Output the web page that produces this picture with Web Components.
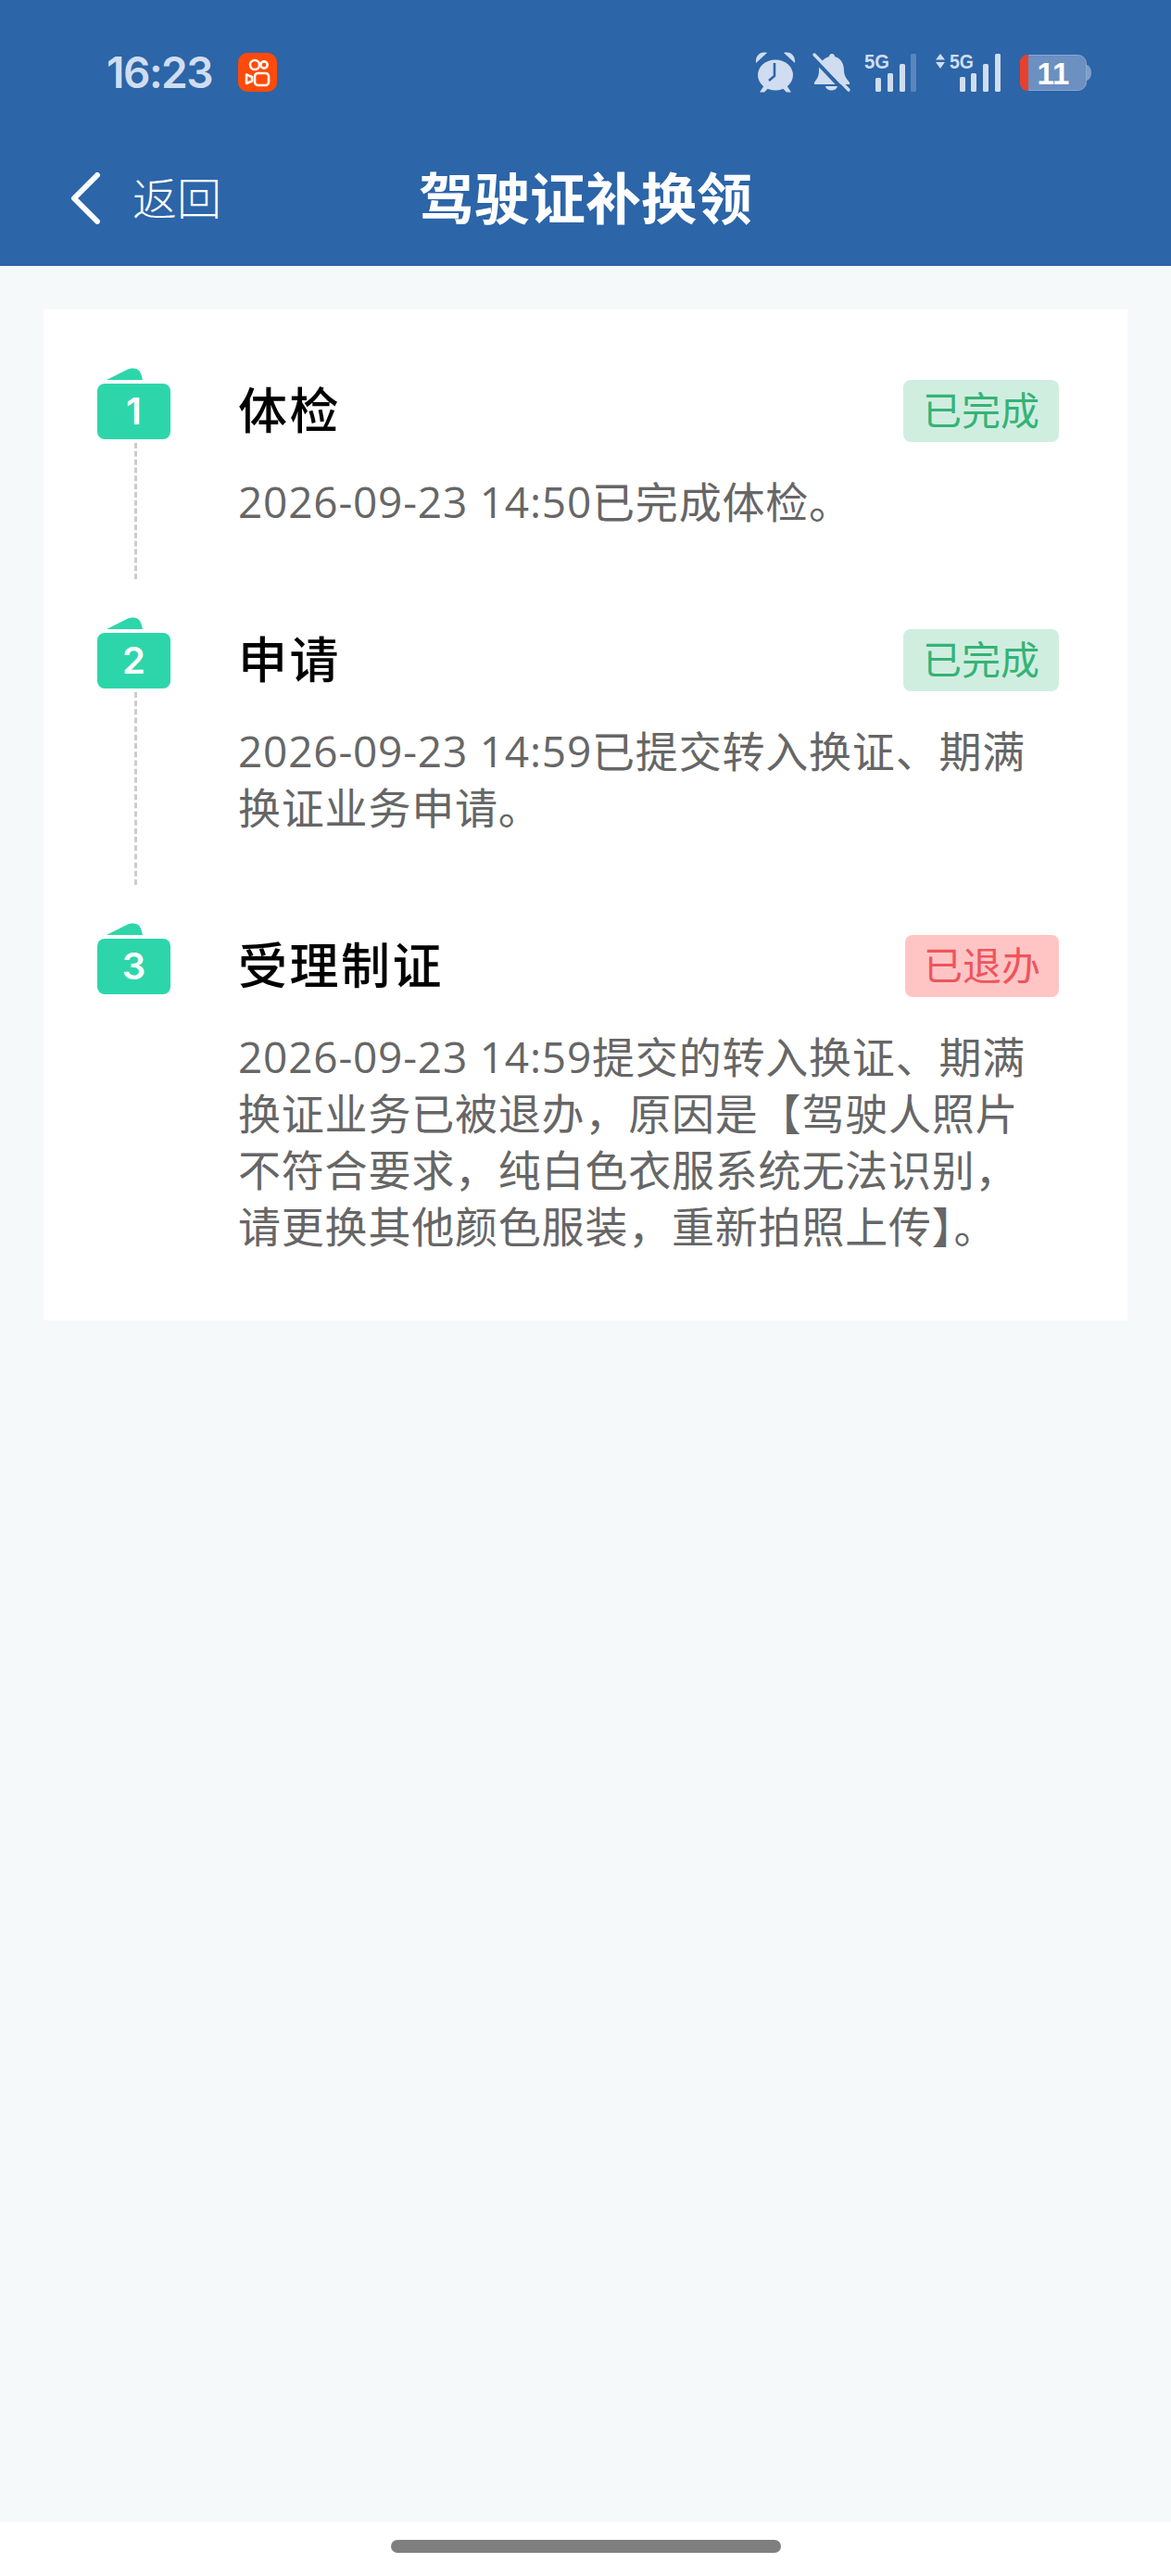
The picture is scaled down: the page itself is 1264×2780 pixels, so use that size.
<!DOCTYPE html>
<html lang="zh-CN">
<head>
<meta charset="utf-8">
<title>驾驶证补换领</title>
<style>
    html, body {
        margin: 0;
        height: 100%;
    }
    body {
        width: 1264px;
        height: 2780px;
        display: flex;
        flex-direction: column;
        background: #ffffff;
        font-family: Inter, "Noto Sans CJK SC", sans-serif;
    }
</style>
</head>
<body>
<status-bar time="16:23"></status-bar>
<nav-bar heading="驾驶证补换领" back="返回"></nav-bar>
<page-body>
    <step-list>
        <step-item number="1" heading="体检" status="已完成" text="2026-09-23 14:50已完成体检。"></step-item>
        <step-item number="2" heading="申请" status="已完成" text="2026-09-23 14:59已提交转入换证、期满换证业务申请。"></step-item>
        <step-item number="3" heading="受理制证" status="已退办" tone="fail" last text="2026-09-23 14:59提交的转入换证、期满换证业务已被退办，原因是【驾驶人照片不符合要求，纯白色衣服系统无法识别，请更换其他颜色服装，重新拍照上传】。"></step-item>
    </step-list>
</page-body>
<home-bar></home-bar>

<script>
/**
 * Top system bar with the clock and the status icons.
 * @extends HTMLElement
 */
class StatusBar extends HTMLElement {
    constructor() {
        super();
        this.shadow = this.attachShadow({ mode: "open" });
    }

    connectedCallback() {
        this.shadow.innerHTML = `
        <style>
            :host {
                display: flex;
                align-items: center;
                box-sizing: border-box;
                height: 156px;
                padding: 0 86px 0 115px;
                background: #2c65a8;
                color: #d0ddf0;
            }
            #time {
                font-size: 46px;
                font-weight: 600;
                letter-spacing: -1.5px;
                width: 142px;
            }
            #icons {
                margin-left: auto;
                display: flex;
                align-items: center;
            }
            svg {
                display: block;
                fill: #d0ddf0;
                overflow: visible;
            }
            text {
                font-family: "Liberation Sans", sans-serif;
                font-weight: 700;
            }
        </style>
        <span id="time">${this.getAttribute("time")}</span>
        <svg width="42" height="42" viewBox="0 0 42 42">
            <rect width="42" height="42" rx="10" fill="#fe4a0a"/>
            <g fill="none" stroke="#fff8f0" stroke-width="2.6">
                <circle cx="18" cy="13" r="5"/>
                <circle cx="28" cy="13" r="3.600"/>
                <rect x="18" y="22" width="15" height="13" rx="3.500"/>
                <path d="M15 26l-6-2.500v9.500l6-2.500z" stroke-linejoin="round"/>
            </g>
        </svg>
        <div id="icons">
            <svg width="44" height="44" viewBox="0 0 44 44">
                <ellipse cx="22" cy="25" rx="19" ry="16.500"/>
                <path d="M1 12C0 4 6-1 13 1zM43 12C44 4 38-1 31 1zM10 36l-5 7.500h5l5-5zM34 36l5 7.500h-5l-5-5z"/>
                <path d="M21 12v14l-6 5" fill="none" stroke="#2c65a8" stroke-width="2.600"/>
            </svg>
            <svg width="41" height="40" viewBox="0 0 41 40" style="margin-left:18px">
                <path d="M21 0c2 0 3 1.500 3 3 7 2 10 8 10 15 0 6 3 9 6 13v2H2v-2c3-4 5-7 5-13 0-7 4-13 11-15 0-1.500 1-3 3-3zM14 35h13c-1 6-12 6-13 0z"/>
                <path d="M-1 3l36 38" stroke="#2c65a8" stroke-width="4"/>
                <path d="M2 1l37 38" stroke="#d0ddf0" stroke-width="3.400" stroke-linecap="round"/>
            </svg>
            <svg width="56" height="41" viewBox="0 0 56 41" style="margin-left:15px">
                <text x="0" y="16" font-size="22" textLength="27" lengthAdjust="spacingAndGlyphs">5G</text>
                <rect x="12" y="26" width="6" height="15" rx="1.500"/>
                <rect x="25" y="21" width="6" height="20" rx="1.500"/>
                <rect x="38" y="11" width="6" height="30" rx="1.500"/>
                <rect x="50" y="0" width="6" height="41" rx="1.500" opacity=".28"/>
            </svg>
            <svg width="70" height="41" viewBox="0 0 70 41" style="margin-left:21px">
                <path d="M5 0l5 6.500H0zM0 9h10l-5 7z"/>
                <text x="15" y="16" font-size="22" textLength="26" lengthAdjust="spacingAndGlyphs">5G</text>
                <rect x="26" y="25" width="6" height="16" rx="1.500"/>
                <rect x="38" y="21" width="6" height="20" rx="1.500"/>
                <rect x="51" y="11" width="6" height="30" rx="1.500"/>
                <rect x="64" y="0" width="6" height="41" rx="1.500"/>
            </svg>
            <svg width="77" height="39" viewBox="0 0 77 39" style="margin-left:21px">
                <path d="M72 11c3 1 5 4 5 8.500S75 27 72 28z" fill="#7f9fca"/>
                <rect x=".5" y=".5" width="71" height="38" rx="9" fill="#6b90c1" stroke="#8aa8d0"/>
                <path d="M9 0H8C3 0 0 4 0 9v21c0 5 3 9 8 9h1z" fill="#e8402c"/>
                <text x="36" y="32" font-size="33" text-anchor="middle" fill="#fff">11</text>
            </svg>
        </div>
        `;
    }
}
customElements.define("status-bar", StatusBar);

/**
 * Navigation bar with the back link and the centred page title.
 * @extends HTMLElement
 */
class NavBar extends HTMLElement {
    constructor() {
        super();
        this.shadow = this.attachShadow({ mode: "open" });
    }

    connectedCallback() {
        this.shadow.innerHTML = `
        <style>
            :host {
                display: grid;
                grid-template-columns: 1fr auto 1fr;
                align-items: center;
                box-sizing: border-box;
                height: 131px;
                padding-bottom: 16px;
                background: #2c65a8;
                color: #ffffff;
            }
            #back {
                display: flex;
                align-items: center;
                gap: 34px;
                padding-left: 76px;
                font-size: 48px;
                font-family: "Noto Sans CJK SC", sans-serif;
                font-weight: 300;
            }
            #back span {
                padding-bottom: 6px;
            }
            svg {
                display: block;
            }
            h1 {
                margin: 0;
                padding-bottom: 6px;
                font-size: 60px;
                line-height: 80px;
                font-weight: 700;
                font-family: "Noto Sans CJK SC", sans-serif;
            }
        </style>
        <div id="back">
            <svg width="33" height="56" viewBox="0 0 33 56">
                <path d="M29 3L4 28l25 25" fill="none" stroke="#fff" stroke-width="6" stroke-linecap="round" stroke-linejoin="round"/>
            </svg>
            <span>${this.getAttribute("back")}</span>
        </div>
        <h1>${this.getAttribute("heading")}</h1>
        `;
    }
}
customElements.define("nav-bar", NavBar);

/**
 * Grey area that fills the page below the navigation bar.
 * @extends HTMLElement
 */
class PageBody extends HTMLElement {
    constructor() {
        super();
        this.shadow = this.attachShadow({ mode: "open" });
        this.shadow.innerHTML = `
        <style>
            :host {
                display: block;
                flex: 1;
                box-sizing: border-box;
                padding: 47px 47px 0;
                background: #f5f9fa;
            }
        </style>
        <slot></slot>
        `;
    }
}
customElements.define("page-body", PageBody);

/**
 * White card that holds the steps.
 * @extends HTMLElement
 */
class StepList extends HTMLElement {
    constructor() {
        super();
        this.shadow = this.attachShadow({ mode: "open" });
        this.shadow.innerHTML = `
        <style>
            :host {
                display: flex;
                flex-direction: column;
                box-sizing: border-box;
                padding: 76px 74px 0 58px;
                background: #ffffff;
            }
        </style>
        <slot></slot>
        `;
    }
}
customElements.define("step-list", StepList);

/**
 * One step of the progress list: marker, title, status badge and description.
 * @extends HTMLElement
 */
class StepItem extends HTMLElement {
    constructor() {
        super();
        this.shadow = this.attachShadow({ mode: "open" });
    }

    connectedCallback() {
        const fail = this.getAttribute("tone") === "fail";
        const last = this.hasAttribute("last");
        this.shadow.innerHTML = `
        <style>
            :host {
                display: flex;
                gap: 73px;
                font-family: Inter, "Noto Sans CJK SC", sans-serif;
            }
            #marker {
                flex: none;
                width: 79px;
                margin-top: -13px;
                display: flex;
                flex-direction: column;
                align-items: center;
            }
            #flap {
                display: block;
            }
            #number {
                box-sizing: border-box;
                width: 79px;
                height: 60px;
                margin-top: 4px;
                padding-bottom: 2px;
                display: flex;
                align-items: center;
                justify-content: center;
                border-radius: 8px;
                background: #2dd6aa;
                color: #ffffff;
                font-size: 40px;
                font-weight: 600;
            }
            #line {
                flex: 1;
                width: 0;
                margin: 4px 0 54px 3px;
                border-left: 3px dashed #cccccc;
            }
            #content {
                flex: 1;
                min-width: 0;
                padding-bottom: ${last ? "71px" : "107px"};
            }
            #head {
                display: flex;
                align-items: center;
                justify-content: space-between;
                height: 67px;
            }
            h2 {
                margin: 0;
                padding-bottom: 8px;
                font-size: 53px;
                font-weight: 500;
                letter-spacing: 2.5px;
                color: #000000;
                font-family: "Noto Sans CJK SC", sans-serif;
            }
            #status {
                box-sizing: border-box;
                height: 67px;
                padding: 0 ${fail ? "20px" : "21px"} 6px;
                display: flex;
                align-items: center;
                border-radius: 8px;
                font-size: 42px;
                font-family: "Noto Sans CJK SC", sans-serif;
                background: ${fail ? "#ffc5c5" : "#d0eee0"};
                color: ${fail ? "#ef545c" : "#35b377"};
            }
            p {
                margin: 34px 0 0;
                font-family: "Open Sans", "Noto Sans CJK SC", sans-serif;
                font-size: 46px;
                line-height: 61px;
                letter-spacing: 0.8px;
                color: #666666;
            }
        </style>
        <div id="marker">
            <svg id="flap" width="79" height="13" viewBox="0 0 79 13">
                <path d="M10 13L32 2c4-2 9-2 12 0 3 2 4 7 5 11z" fill="#2dd6aa"/>
            </svg>
            <div id="number">${this.getAttribute("number")}</div>
            ${last ? "" : '<div id="line"></div>'}
        </div>
        <div id="content">
            <div id="head">
                <h2>${this.getAttribute("heading")}</h2>
                <span id="status">${this.getAttribute("status")}</span>
            </div>
            <p>${this.getAttribute("text")}</p>
        </div>
        `;
    }
}
customElements.define("step-item", StepItem);

/**
 * White strip at the bottom with the gesture handle.
 * @extends HTMLElement
 */
class HomeBar extends HTMLElement {
    constructor() {
        super();
        this.shadow = this.attachShadow({ mode: "open" });
        this.shadow.innerHTML = `
        <style>
            :host {
                display: flex;
                justify-content: center;
                box-sizing: border-box;
                height: 58px;
                padding-top: 19px;
                background: #ffffff;
            }
            div {
                width: 421px;
                height: 14px;
                border-radius: 7px;
                background: #7f7f7f;
            }
        </style>
        <div></div>
        `;
    }
}
customElements.define("home-bar", HomeBar);
</script>
</body>
</html>
